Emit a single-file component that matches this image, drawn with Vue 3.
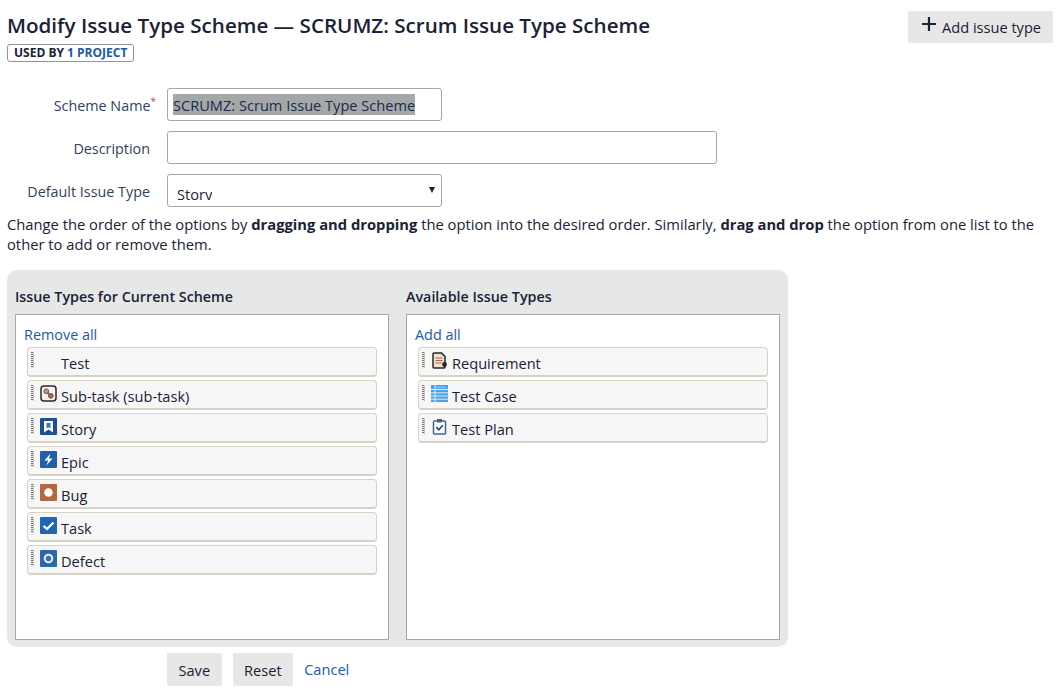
<template>
  <div class="page">
    <header class="head">
      <div>
        <h1 class="title">Modify Issue Type Scheme — SCRUMZ: Scrum Issue Type Scheme</h1>
        <span class="badge">USED BY <a class="badge-link">1 PROJECT</a></span>
      </div>
      <button class="btn add-btn" type="button">
        <svg class="plus" viewBox="0 0 14 14"><path d="M7 0v14M0 7h14" fill="none" stroke="#1d2433" stroke-width="2.2" /></svg>
        Add issue type
      </button>
    </header>

    <form class="form">
      <div class="field">
        <label class="label">Scheme Name<sup class="req">*</sup></label>
        <div class="input input-short"><span class="selected">SCRUMZ: Scrum Issue Type Scheme</span></div>
      </div>
      <div class="field">
        <label class="label">Description</label>
        <div class="input input-long"></div>
      </div>
      <div class="field">
        <label class="label">Default Issue Type</label>
        <div class="input input-short select">
          <span class="select-value">Story</span>
          <span class="select-arrow"></span>
        </div>
      </div>
    </form>

    <p class="help">
      Change the order of the options by <b>dragging and dropping</b> the option into the desired order. Similarly, <b>drag and drop</b> the option from one list to the other to add or remove them.
    </p>

    <section class="panel">
      <div v-for="col in columns" :key="col.title" class="col">
        <h3 class="col-title">{{ col.title }}</h3>
        <div class="box">
          <a class="link bulk">{{ col.action }}</a>
          <ul class="list">
            <li v-for="item in col.items" :key="item.name" class="row">
              <span class="grip"></span>
              <svg class="icon" viewBox="0 0 17 17" v-html="icons[item.icon]"></svg>
              <span class="row-name">{{ item.name }}</span>
            </li>
          </ul>
        </div>
      </div>
    </section>

    <div class="actions">
      <button class="btn" type="button">Save</button>
      <button class="btn" type="button">Reset</button>
      <a class="link cancel">Cancel</a>
    </div>
  </div>
</template>

<script setup>
const icons = {
  none: '',
  subtask: `
    <rect x="1" y="1" width="15" height="15" rx="3" fill="#f6f1ea" stroke="#2b2a2a" stroke-width="1.5"/>
    <circle cx="6.3" cy="6.3" r="2.4" fill="#c39a84" stroke="#5a4a44" stroke-width="0.9"/>
    <circle cx="10.8" cy="10.8" r="2.4" fill="#b5683f" stroke="#5a4a44" stroke-width="0.9"/>
    <path d="M7.6 7.6l2 2" stroke="#5a4a44" stroke-width="1"/>`,
  story: `
    <rect width="17" height="17" rx="1" fill="#1a4f96"/>
    <path d="M4 3h9v11.5l-4.5-3-4.5 3z" fill="#fff"/>
    <path d="M6.5 5h4v5.5l-2-1.3-2 1.3z" fill="#3e74b6"/>`,
  epic: `
    <rect width="17" height="17" rx="1" fill="#1f5fae"/>
    <path d="M10.5 2.5 4.5 9.5h3.6L6.5 14.5l6-7H8.9z" fill="#fff"/>`,
  bug: `
    <rect width="17" height="17" rx="1" fill="#b5683f"/>
    <circle cx="8.5" cy="8.5" r="4.3" fill="#fff"/>`,
  task: `
    <rect width="17" height="17" rx="1" fill="#1f66b8"/>
    <path d="M3.5 8.8l3.5 3.2 6.5-6.5" fill="none" stroke="#fff" stroke-width="2.3"/>`,
  defect: `
    <rect width="17" height="17" rx="1" fill="#2b67ad"/>
    <circle cx="8.5" cy="8.5" r="3.8" fill="#3f6fa8" stroke="#e8edf3" stroke-width="2"/>`,
  requirement: `
    <path d="M3 1h7.5L14 4.5V15a1 1 0 0 1-1 1H3a1 1 0 0 1-1-1V2a1 1 0 0 1 1-1z" fill="#efe2d4" stroke="#27272b" stroke-width="1.5"/>
    <path d="M4.5 6h7M4.5 8.5h7M4.5 11h6" stroke="#b0683c" stroke-width="1.2"/>
    <circle cx="13.5" cy="12.5" r="2.4" fill="#27272b"/>`,
  testcase: `
    <rect x="0" y="0" width="17" height="17" fill="#4aa3ea"/>
    <path d="M0 4.5h17M0 7.8h17M0 11h17M0 14.2h17" stroke="#d9edfb" stroke-width="1"/>
    <path d="M4 0v17" stroke="#d9edfb" stroke-width="1"/>
    <path d="M5.5 2.2h10" stroke="#fff" stroke-width="1" stroke-dasharray="1 1"/>`,
  testplan: `
    <rect x="2.5" y="3" width="12" height="13" rx="1" fill="#fff" stroke="#41638c" stroke-width="1.5"/>
    <rect x="6" y="1" width="5" height="3.5" fill="#41638c"/>
    <path d="M5.3 9.2l2.5 2.5 4-4.5" fill="none" stroke="#2b4a70" stroke-width="1.7"/>`,
}

const columns = [
  {
    title: 'Issue Types for Current Scheme',
    action: 'Remove all',
    items: [
      { name: 'Test', icon: 'none' },
      { name: 'Sub-task (sub-task)', icon: 'subtask' },
      { name: 'Story', icon: 'story' },
      { name: 'Epic', icon: 'epic' },
      { name: 'Bug', icon: 'bug' },
      { name: 'Task', icon: 'task' },
      { name: 'Defect', icon: 'defect' },
    ],
  },
  {
    title: 'Available Issue Types',
    action: 'Add all',
    items: [
      { name: 'Requirement', icon: 'requirement' },
      { name: 'Test Case', icon: 'testcase' },
      { name: 'Test Plan', icon: 'testplan' },
    ],
  },
]
</script>

<style>
html, body {
  background: #fff;
}
</style>

<style scoped>
.page {
  width: 1056px;
  height: 693px;
  overflow: hidden;
  box-sizing: border-box;
  padding: 11px 3px 0 7px;
  font-family: "Open Sans", "Noto Sans", "Liberation Sans", sans-serif;
  font-size: 14.6px;
  color: #172b4d;
}

.head {
  display: flex;
  justify-content: space-between;
  align-items: flex-start;
  height: 77px;
}

.title {
  margin: 0;
  font-size: 20.6px;
  line-height: 28px;
  font-weight: 600;
  color: #1b2136;
}

.badge {
  display: inline-block;
  margin-top: 5px;
  padding: 0 6px;
  height: 16px;
  line-height: 16px;
  border: 1px solid #8f9498;
  border-radius: 3px;
  font-size: 12px;
  font-weight: 700;
  color: #1b2136;
}

.badge-link {
  color: #1c5aa6;
}

.btn {
  border: 0;
  border-radius: 2px;
  font: inherit;
  color: #1b2136;
  height: 33px;
  padding: 0 12px;
  background-color: #e6e7e6;
  background-image: radial-gradient(#cfcfc6 0.6px, transparent 0.7px);
  background-size: 4px 4px;
}

.add-btn {
  display: flex;
  align-items: center;
  gap: 6px;
  width: 145px;
  height: 32px;
  padding: 0 0 0 14px;
}

.plus {
  flex: none;
  width: 14px;
  height: 14px;
  margin-top: -7px;
}

.form {
  display: flex;
  flex-direction: column;
  gap: 10px;
}

.field {
  display: flex;
  align-items: center;
  gap: 17px;
}

.label {
  width: 143px;
  padding-top: 2px;
  font-size: 14.35px;
  text-align: right;
  color: #33415c;
}

.req {
  color: #b5562a;
  font-size: 10px;
  line-height: 0;
  margin-right: -6px;
}

.input {
  box-sizing: border-box;
  height: 33px;
  border: 1px solid #a5a8a8;
  border-radius: 3px;
  background: #fff;
  display: flex;
  align-items: center;
  padding-left: 5px;
}

.input-short {
  width: 275px;
}

.input-long {
  width: 550px;
}

.selected {
  background: #a5a8a8;
  padding-top: 1px;
  line-height: 20px;
  color: #1b2b4a;
}

.select {
  position: relative;
  padding-left: 9px;
  align-items: flex-start;
}

.select-value {
  display: block;
  height: 25px;
  padding-top: 10px;
  box-sizing: border-box;
  line-height: 19px;
  overflow: hidden;
  color: #1b2136;
}

.select-arrow {
  position: absolute;
  right: 6px;
  top: 12px;
  border-left: 3.5px solid transparent;
  border-right: 3.5px solid transparent;
  border-top: 6px solid #1b2136;
}

.help {
  margin: 7px 0 0;
  font-size: 14.75px;
  line-height: 20px;
  color: #1b2136;
}

.panel {
  display: flex;
  gap: 17px;
  box-sizing: border-box;
  width: 781px;
  height: 377px;
  margin-top: 16px;
  padding: 18px 8px 7px;
  background: #e6e8e8;
  border-radius: 10px;
}

.col-title {
  margin: 0;
  height: 26px;
  font-size: 14.3px;
  line-height: 18px;
  font-weight: 600;
  color: #1b2136;
}

.box {
  box-sizing: border-box;
  width: 374px;
  height: 326px;
  background: #fff;
  border: 1px solid #a5a8a8;
  padding: 10px 11px 0 8px;
}

.link {
  color: #1c5aa6;
}

.bulk {
  display: block;
  font-size: 14.4px;
  line-height: 20px;
}

.list {
  list-style: none;
  margin: 2px 0 0 3px;
  padding: 0;
  display: flex;
  flex-direction: column;
  gap: 3px;
}

.row {
  box-sizing: border-box;
  display: flex;
  align-items: flex-start;
  height: 30px;
  border: 1px solid #d8d2c6;
  border-bottom-width: 2px;
  border-radius: 4px;
  background: repeating-conic-gradient(#f1f1f1 0 25%, #fcfcfc 0 50%) 0 0 / 2px 2px;
  color: #1b2136;
}

.grip {
  flex: none;
  width: 2px;
  height: 16px;
  margin: 4px 6px 0 3px;
  background: repeating-linear-gradient(to bottom, #77736e 0 1px, #f0f0f0 1px 2px);
  border-right: 1px solid #c9c2b8;
}

.icon {
  flex: none;
  width: 17px;
  height: 17px;
  margin-top: 4px;
}

.row-name {
  margin-left: 4px;
  line-height: 20px;
  margin-top: 5px;
}

.actions {
  display: flex;
  align-items: center;
  gap: 11px;
  margin: 6px 0 0 160px;
}

.actions .btn {
  padding: 0 11.5px;
}

.cancel {
  line-height: 33px;
}
</style>
